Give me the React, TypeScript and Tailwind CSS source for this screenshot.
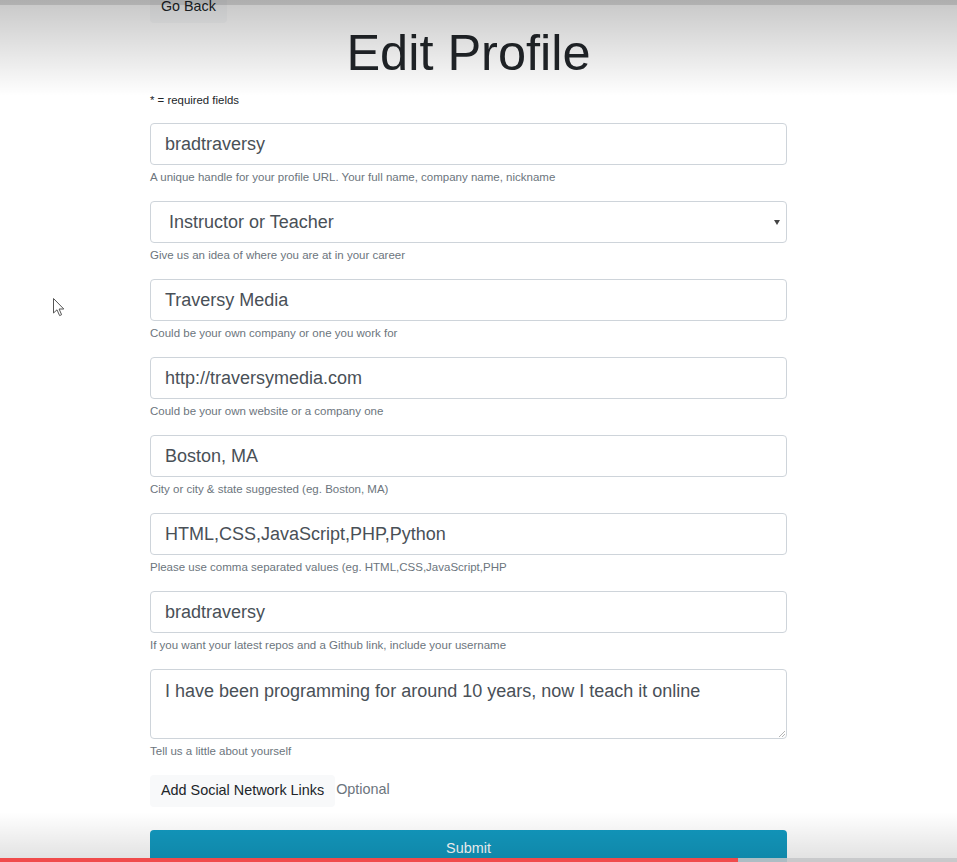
import React from 'react'

type Field = {
  value: string
  help: string
  kind?: 'select' | 'textarea'
}

const FIELDS: Field[] = [
  { value: 'bradtraversy', help: 'A unique handle for your profile URL. Your full name, company name, nickname' },
  { value: 'Instructor or Teacher', help: 'Give us an idea of where you are at in your career', kind: 'select' },
  { value: 'Traversy Media', help: 'Could be your own company or one you work for' },
  { value: 'http://traversymedia.com', help: 'Could be your own website or a company one' },
  { value: 'Boston, MA', help: 'City or city & state suggested (eg. Boston, MA)' },
  { value: 'HTML,CSS,JavaScript,PHP,Python', help: 'Please use comma separated values (eg. HTML,CSS,JavaScript,PHP' },
  { value: 'bradtraversy', help: 'If you want your latest repos and a Github link, include your username' },
  { value: 'I have been programming for around 10 years, now I teach it online', help: 'Tell us a little about yourself', kind: 'textarea' },
]

function FormRow({ field }: { field: Field }) {
  const base =
    'w-full rounded-[4px] border border-[#ced4da] bg-white text-[18px] text-[#495057] flex'
  return (
    <div className="mb-[17px]">
      {field.kind === 'textarea' ? (
        <div className={`${base} relative h-[70px] items-start pl-[14px] pt-[8px] leading-[26px]`}>
          {field.value}
          <svg className="absolute right-[1px] bottom-[1px]" width="6" height="6" viewBox="0 0 6 6">
            <path d="M6 0 L0 6 M6 3 L3 6" stroke="#b5b5b5" strokeWidth="1" />
          </svg>
        </div>
      ) : field.kind === 'select' ? (
        <div className={`${base} h-[42px] items-center justify-between pl-[18px] pr-[6px]`}>
          <span>{field.value}</span>
          <svg width="6" height="5" viewBox="0 0 6 5">
            <path d="M0 0 H6 L3 5 Z" fill="#444" />
          </svg>
        </div>
      ) : (
        <div className={`${base} h-[42px] items-center pl-[14px]`}>{field.value}</div>
      )}
      <p className="mt-[6px] text-[11.5px] leading-[13px] text-[#6c757d]">{field.help}</p>
    </div>
  )
}

export default function App() {
  return (
    <div
      className="relative h-[862px] w-[957px] overflow-hidden bg-white"
      style={{ fontFamily: '"Liberation Sans", Arial, sans-serif' }}
    >
      <div className="ml-[150px] w-[637px]">
        <button className="mt-[-9px] block h-[32px] rounded-[4px] bg-[#f8f9fa] px-[11px] text-[14.3px] text-[#212529]">
          Go Back
        </button>

        <h1 className="mt-[0px] text-center text-[50.5px] leading-[60px] text-[#212529]">Edit Profile</h1>

        <p className="mt-[11px] text-[11.4px] leading-[13px] text-[#212529]">* = required fields</p>

        <div className="mt-[16px]">
          {FIELDS.map((f, i) => (
            <FormRow key={i} field={f} />
          ))}
        </div>

        <div className="mt-[1px] flex items-center">
          <button className="h-[32px] rounded-[4px] bg-[#f8f9fa] px-[11px] text-[14.4px] text-[#212529]">
            Add Social Network Links
          </button>
          <span className="ml-[1px] mt-[-2px] text-[14.4px] text-[#6c757d]">Optional</span>
        </div>

        <button className="mt-[23px] flex h-[40px] w-full justify-center rounded-[4px] bg-[#1299bf] pt-[8px] text-[14.4px] text-white">
          Submit
        </button>
      </div>

      {/* video overlays */}
      <div className="pointer-events-none absolute inset-x-0 top-0 h-[96px] bg-gradient-to-b from-[rgba(0,0,0,0.22)] to-transparent" />
      <div className="pointer-events-none absolute inset-x-0 top-0 h-[5px] bg-[rgba(0,0,0,0.12)]" />
      <div className="pointer-events-none absolute inset-x-0 bottom-0 h-[50px] bg-gradient-to-b from-transparent to-[rgba(0,0,0,0.12)]" />
      <div className="pointer-events-none absolute bottom-0 left-0 flex h-[4px] w-full">
        <div className="h-full w-[738px] bg-[#f04b4b]" />
        <div className="h-full flex-1 bg-[rgba(196,198,200,0.87)]" />
      </div>

      <svg className="pointer-events-none absolute left-[53px] top-[298px]" width="13" height="20" viewBox="0 0 13 20">
        <path d="M0.5 0.5 L0.5 15 L4 11.8 L6.6 17.6 L8.6 16.7 L6.1 11 L10.8 11 Z" fill="white" stroke="#555" strokeWidth="1" />
      </svg>
    </div>
  )
}
